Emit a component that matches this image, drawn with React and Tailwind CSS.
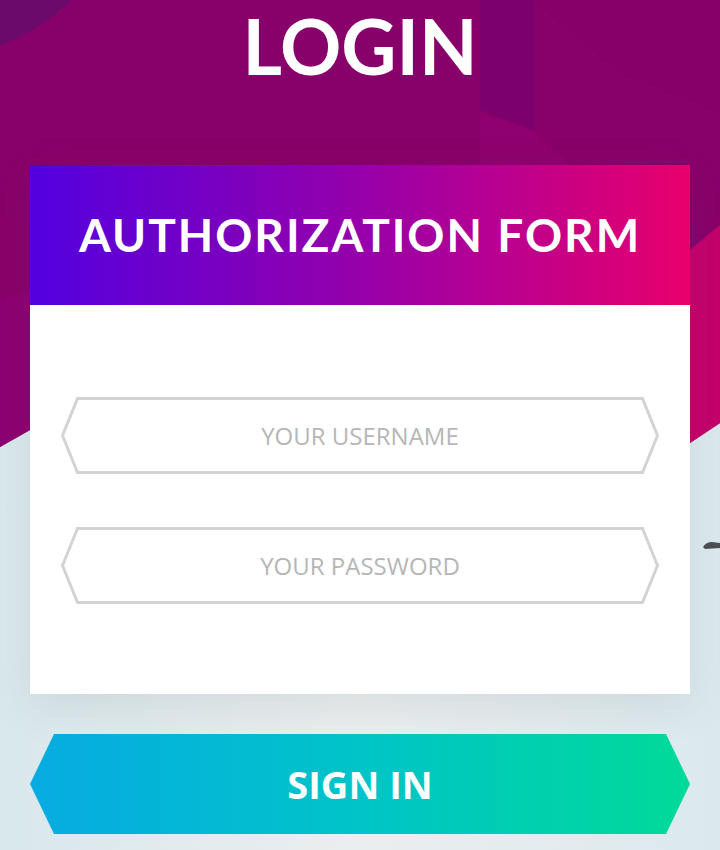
const FIELDS = [
  { name: "username", label: "YOUR USERNAME", type: "text" },
  { name: "password", label: "YOUR PASSWORD", type: "password" },
];

function Backdrop() {
  return (
    <svg
      className="absolute inset-0"
      width="720"
      height="850"
      viewBox="0 0 720 850"
    >
      <polygon
        points="0,0 720,0 720,423 690,443 360,470 30,430 0,447"
        fill="#88006a"
      />
      <path d="M0,0 L72,0 Q40,30 0,46 Z" fill="#6c0a6c" />
      <polygon points="480,0 535,0 535,130 480,110" fill="#7c006e" />
      <polygon points="480,112 535,132 570,165 480,165" fill="#8f006e" />
      <polygon points="535,0 720,0 720,110 620,70" fill="#840068" />
      <polygon points="690,250 720,225 720,423 690,443" fill="#c4006b" />
      <polygon points="0,300 30,290 30,430 0,447" fill="#8c0070" />
      <path d="M703,547 q3,-5 9,-5 l8,1 l0,5 l-15,1 z" fill="#4b4f52" />
    </svg>
  );
}

function Field({ name, label, type }) {
  return (
    <div className="relative h-[77px] w-[598px]">
      <svg
        className="absolute inset-0"
        width="598"
        height="77"
        viewBox="0 0 598 77"
      >
        <polygon
          points="1.5,38.5 16.5,1.5 581.5,1.5 596.5,38.5 581.5,75.5 16.5,75.5"
          fill="#ffffff"
          stroke="#d3d3d3"
          strokeWidth="3"
        />
      </svg>
      <input
        name={name}
        type={type}
        placeholder={label}
        className="relative h-full w-full bg-transparent px-8 text-center text-[24px] text-[#9a9a9a] outline-none placeholder:text-[#b6b6b6] [font-family:'Open_Sans',sans-serif]"
      />
    </div>
  );
}

export default function App() {
  return (
    <div className="relative h-[850px] w-[720px] overflow-hidden bg-linear-to-r/srgb from-[#d9e8ec] via-[#ebeeef] to-[#dbe9ee]">
      <Backdrop />
      <div className="relative flex flex-col items-center">
        <h1 className="pt-2 text-[76px] font-bold leading-none text-white [font-family:Lato,sans-serif]">
          LOGIN
        </h1>

        <div className="mt-[81px] w-[660px] shadow-[0_12px_40px_rgba(80,90,100,0.12)]">
          <div className="flex h-[140px] items-center justify-center bg-linear-to-r/srgb from-[#5200e0] via-[#9600aa] to-[#e8006c]">
            <h2 className="text-[46px] font-bold leading-none tracking-[2px] text-white [font-family:Lato,sans-serif]">
              AUTHORIZATION FORM
            </h2>
          </div>
          <form className="flex flex-col items-center gap-[53px] bg-white pt-[92px] pb-[90px]">
            {FIELDS.map((f) => (
              <Field key={f.name} {...f} />
            ))}
          </form>
        </div>

        <button className="mt-[40px] flex h-[100px] w-[660px] items-center justify-center bg-linear-to-r/srgb from-[#07abe2] via-[#00c4c8] to-[#00da98] text-[38px] font-bold text-white [clip-path:polygon(0_50%,24px_0,calc(100%-24px)_0,100%_50%,calc(100%-24px)_100%,24px_100%)] [font-family:'Open_Sans',sans-serif]">
          SIGN IN
        </button>
      </div>
    </div>
  );
}
